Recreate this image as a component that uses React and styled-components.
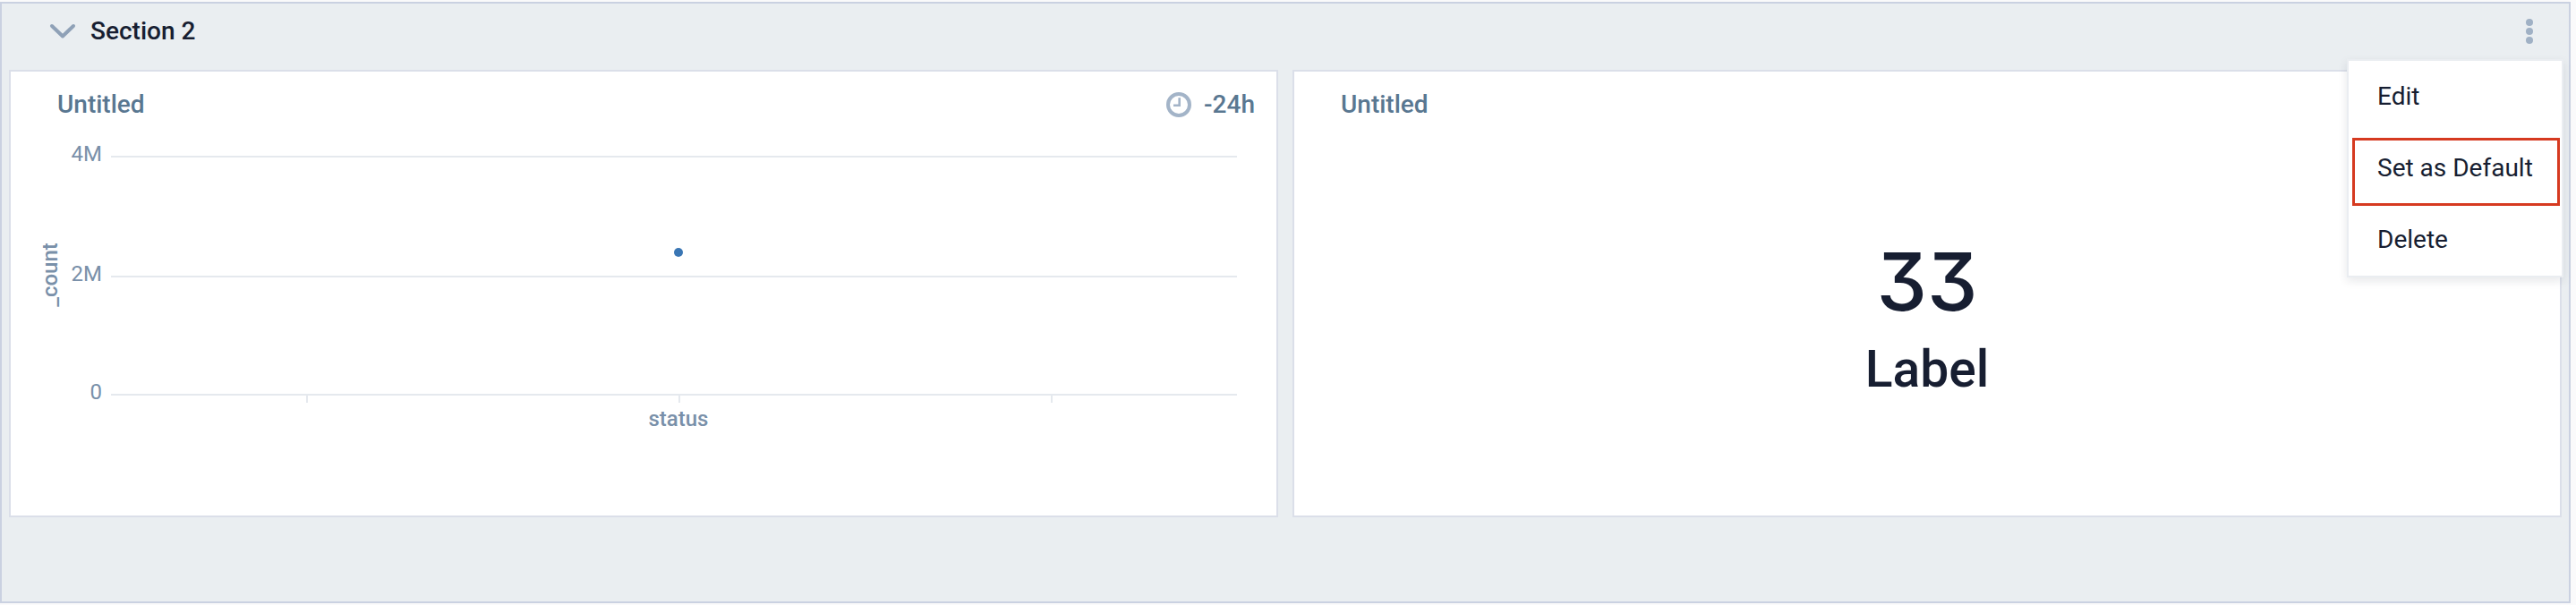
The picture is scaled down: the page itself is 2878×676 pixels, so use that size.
import React, { useState } from 'react';
import styled, { createGlobalStyle } from 'styled-components';

const GlobalStyle = createGlobalStyle`
    * {
        box-sizing: border-box;
    }
    body {
        margin: 0;
        background: #fafafb;
        color: #171e31;
        font-family: Roboto, "Liberation Sans", sans-serif;
        font-size: 28px;
        line-height: 32px;
    }
`;

const gridLines = [
    { label: '4M', y: 21 },
    { label: '2M', y: 155 },
    { label: '0', y: 287 },
];
const ticks = [331, 747, 1163];

const Chart = () => (
    <ChartSvg viewBox="0 0 1414 422" role="img" aria-label="_count by status">
        {gridLines.map(({ label, y }) => (
            <g key={label}>
                <line x1="112" x2="1370" y1={y} y2={y} />
                <text x="102" y={y + 5} textAnchor="end">{label}</text>
            </g>
        ))}
        {ticks.map(x => <line key={x} x1={x} x2={x} y1="288" y2="296" />)}
        <circle cx="746" cy="128" r="5" />
        <AxisTitle x="746" y="322">status</AxisTitle>
        <AxisTitle transform="translate(52 153) rotate(-90)">_count</AxisTitle>
    </ChartSvg>
);

const ClockIcon = () => (
    <svg width="28" height="28" viewBox="0 0 28 28" fill="none" stroke="#a3b4c8" aria-hidden="true">
        <circle cx="14" cy="14" r="12" strokeWidth="4" />
        <path d="M14.7 6.3V14.8H8" strokeWidth="2.6" />
    </svg>
);

const menuItems = ['Edit', 'Set as Default', 'Delete'];

const App = () => {
    const [open, setOpen] = useState(true);
    const [collapsed, setCollapsed] = useState(false);

    return (
        <>
            <GlobalStyle />
            <Section>
                <SectionHeader>
                    <SectionToggle type="button" aria-expanded={!collapsed} onClick={() => setCollapsed(!collapsed)}>
                        <svg width="30" height="20" viewBox="0 0 30 20" fill="none" stroke="#8fa1b7" strokeWidth="4" strokeLinecap="round" strokeLinejoin="round" aria-hidden="true">
                            <path d="M3 4L15 15.5L27 4" />
                        </svg>
                        Section 2
                    </SectionToggle>
                    <MenuAnchor>
                        <KebabButton type="button" aria-label="Section options" aria-expanded={open} onClick={() => setOpen(!open)}>
                            <svg width="8" height="30" viewBox="0 0 8 30" fill="#a0b1c5" aria-hidden="true">
                                <circle cx="4" cy="5" r="4" />
                                <circle cx="4" cy="15" r="4" />
                                <circle cx="4" cy="25" r="4" />
                            </svg>
                        </KebabButton>
                        {open && (
                            <Menu>
                                {menuItems.map(item => (
                                    <MenuItem key={item} type="button" $marked={item === 'Set as Default'}>{item}</MenuItem>
                                ))}
                            </Menu>
                        )}
                    </MenuAnchor>
                </SectionHeader>
                {!collapsed && (
                    <Panels>
                        <Panel>
                            <PanelHeader>
                                <PanelTitle>Untitled</PanelTitle>
                                <TimeRange><ClockIcon />-24h</TimeRange>
                            </PanelHeader>
                            <Chart />
                        </Panel>
                        <Panel>
                            <PanelHeader>
                                <PanelTitle>Untitled</PanelTitle>
                            </PanelHeader>
                            <Metric>
                                <MetricValue>33</MetricValue>
                                <MetricLabel>Label</MetricLabel>
                            </Metric>
                        </Panel>
                    </Panels>
                )}
            </Section>
        </>
    );
};

const Section = styled.section`
    margin: 2px 6px 2px 0;
    padding: 0 8px 94px;
    border: 2px solid #cad1e1;
    background: #eaeef1;
`;

const SectionHeader = styled.header`
    display: flex;
    align-items: center;
    justify-content: space-between;
    height: 62px;
    margin-bottom: 12px;
    padding: 0 32px 0 45px;
`;

const Button = styled.button`
    padding: 0;
    border: 0;
    background: none;
    color: inherit;
    font: inherit;
    cursor: pointer;
`;

const SectionToggle = styled(Button)`
    display: flex;
    align-items: center;
    gap: 16px;
    font-weight: 500;
`;

const MenuAnchor = styled.div`
    position: relative;
`;

const KebabButton = styled(Button)`
    display: flex;
`;

const Menu = styled.div`
    position: absolute;
    z-index: 1;
    top: 46px;
    right: -34px;
    width: 242px;
    border: 2px solid #eaedf1;
    background: #fff;
    box-shadow: 0 4px 10px rgba(23, 30, 49, 0.1);
`;

const MenuItem = styled(Button)`
    position: relative;
    display: block;
    width: 100%;
    height: 80px;
    padding: 0 32px;
    text-align: left;
    white-space: nowrap;

    ${({ $marked }) => $marked && `
        &::after {
            content: "";
            position: absolute;
            inset: 6px 2px -2px 4px;
            border: 3px solid #d63a20;
        }
    `}
`;

const Panels = styled.div`
    display: grid;
    grid-template-columns: 1fr 1fr;
    gap: 16px;
`;

const Panel = styled.article`
    display: flex;
    flex-direction: column;
    min-height: 500px;
    border: 2px solid #dbdfe9;
    background: #fff;
`;

const PanelHeader = styled.div`
    display: flex;
    align-items: center;
    justify-content: space-between;
    height: 74px;
    padding: 0 24px 0 52px;
    color: #597791;
    font-weight: 500;
`;

const PanelTitle = styled.h2`
    margin: 0;
    font-size: 28px;
    font-weight: 500;
`;

const TimeRange = styled.span`
    display: flex;
    align-items: center;
    gap: 14px;
`;

const ChartSvg = styled.svg`
    display: block;
    width: 100%;
    font-size: 24px;

    line {
        stroke: #e5e9ee;
        stroke-width: 2px;
    }
    text {
        fill: #7990a9;
    }
    circle {
        fill: #3a76b4;
    }
`;

const AxisTitle = styled.text`
    font-weight: 500;
    text-anchor: middle;
`;

const Metric = styled.div`
    display: flex;
    flex: 1;
    flex-direction: column;
    align-items: center;
    padding-top: 105px;
`;

const MetricValue = styled.div`
    font-family: Inter, Roboto, sans-serif;
    font-feature-settings: "cv09";
    font-size: 90px;
    font-weight: 500;
    line-height: 112px;
`;

const MetricLabel = styled.div`
    font-size: 57px;
    font-weight: 500;
    line-height: 84px;
`;

export default App;
